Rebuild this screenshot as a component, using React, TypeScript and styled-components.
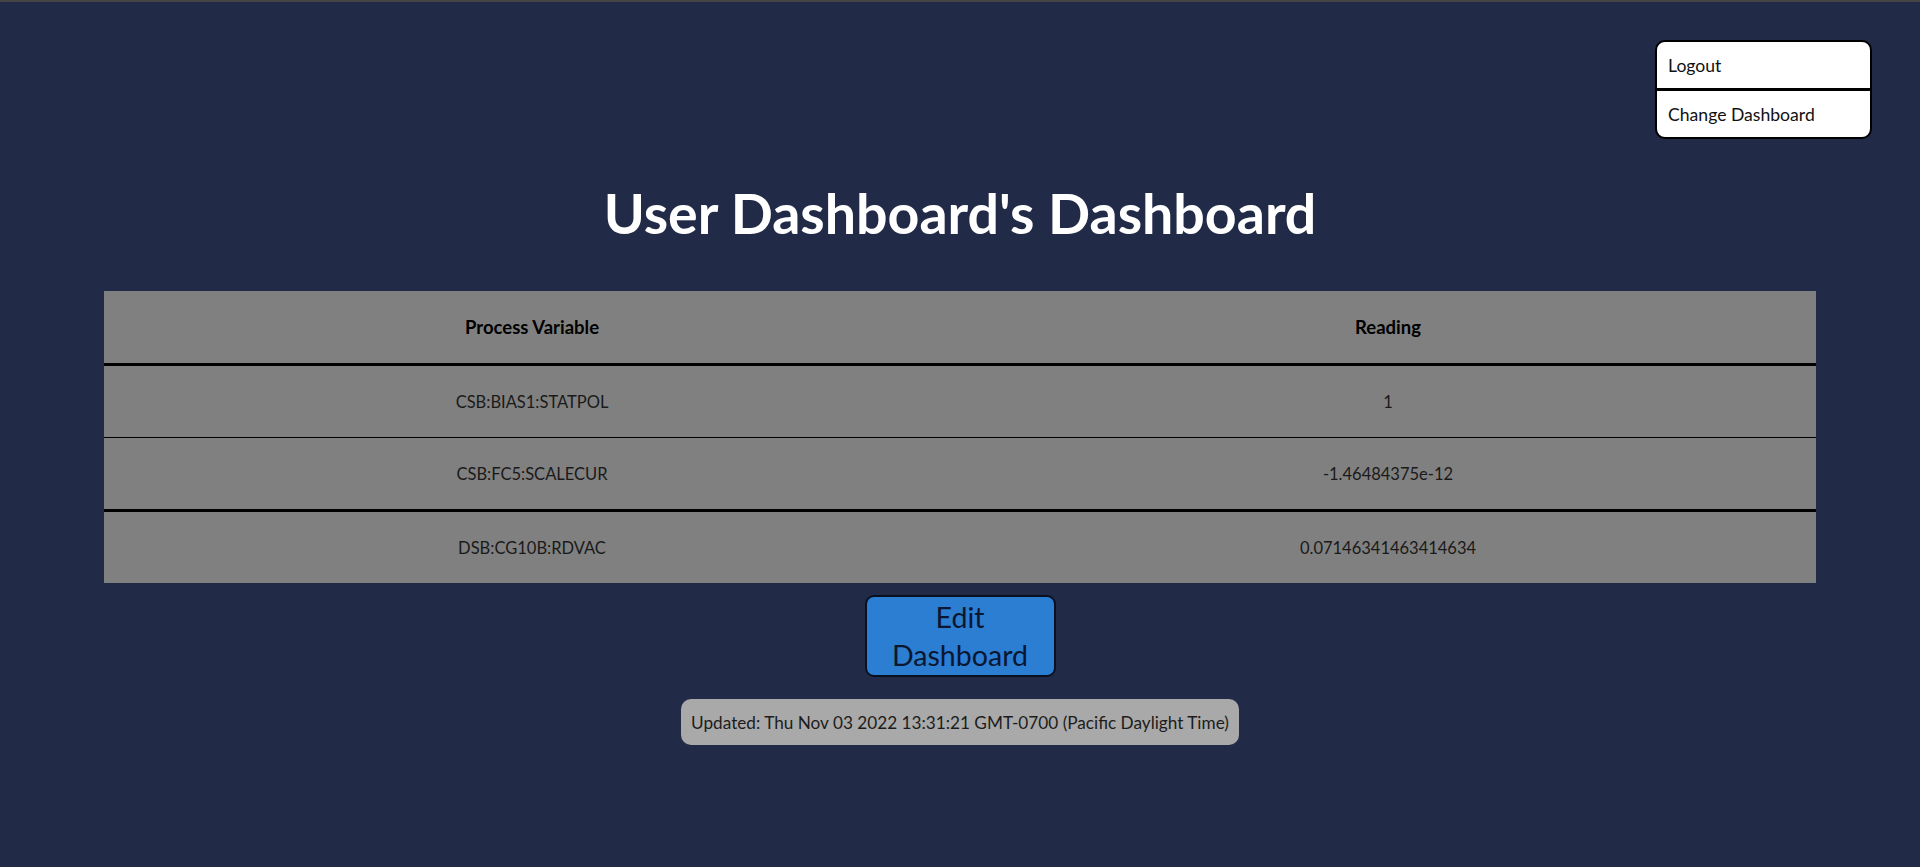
import React from 'react'
import styled, { createGlobalStyle } from 'styled-components'

const GlobalStyle = createGlobalStyle`
  html, body {
    margin: 0;
    padding: 0;
    background: #212a47;
  }
  body {
    font-family: Lato, "Noto Sans", "Liberation Sans", sans-serif;
    border-top: 2px solid #454545;
  }
`

const Page = styled.div`
  min-height: calc(100vh - 2px);
  display: flex;
  flex-direction: column;
  align-items: center;
  background: #212a47;
`

const TopBar = styled.div`
  align-self: stretch;
  display: flex;
  justify-content: flex-end;
  padding: 38px 48px 0 0;
`

const Menu = styled.div`
  width: 213px;
  background: #ffffff;
  border: 2px solid #000000;
  border-radius: 10px;
  overflow: hidden;
  display: flex;
  flex-direction: column;
`

interface MenuItemProps {
  divided?: boolean
}

const MenuItem = styled.button<MenuItemProps>`
  height: ${p => (p.divided ? '49px' : '46px')};
  border: none;
  border-top: ${p => (p.divided ? '3px solid #000' : 'none')};
  background: transparent;
  text-align: left;
  padding: 0 0 0 11px;
  font-family: inherit;
  font-size: 17.6px;
  color: #111;
  cursor: pointer;
`

const Title = styled.h1`
  margin: 39px 0 43px;
  color: #ffffff;
  font-size: 55.5px;
  font-weight: 700;
  line-height: 70px;
`

const Table = styled.table`
  width: 1712px;
  border-collapse: collapse;
  background: #808080;
  table-layout: fixed;
`

interface RowProps {
  line: number
}

const Row = styled.tr<RowProps>`
  border-bottom: ${p => (p.line ? `${p.line}px solid #000` : 'none')};
`

const HeadCell = styled.th`
  height: 72px;
  padding: 0;
  font-size: 18.5px;
  font-weight: 700;
  color: #000;
`

const Cell = styled.td`
  height: 71px;
  padding: 0;
  text-align: center;
  font-size: 16.5px;
  color: #1a1a1a;
`

const EditButton = styled.button`
  margin-top: 12px;
  width: 191px;
  height: 82px;
  background: #2b7ed2;
  border: 2px solid #0b1020;
  border-radius: 9px;
  font-family: inherit;
  font-size: 28.6px;
  line-height: 38px;
  color: #0c1630;
  padding: 0;
  cursor: pointer;
`

const Updated = styled.div`
  margin-top: 22px;
  background: #a9a9a9;
  border-radius: 10px;
  height: 46px;
  padding: 0 10px;
  display: flex;
  align-items: center;
  font-size: 17.2px;
  color: #1c1c1c;
`

const rows = [
  { pv: 'CSB:BIAS1:STATPOL', reading: '1', line: 1 },
  { pv: 'CSB:FC5:SCALECUR', reading: '-1.46484375e-12', line: 3 },
  { pv: 'DSB:CG10B:RDVAC', reading: '0.07146341463414634', line: 0 },
]

const App: React.FC = () => (
  <Page>
    <GlobalStyle />
    <TopBar>
      <Menu>
        <MenuItem>Logout</MenuItem>
        <MenuItem divided>Change Dashboard</MenuItem>
      </Menu>
    </TopBar>
    <Title>User Dashboard's Dashboard</Title>
    <Table>
      <thead>
        <Row line={3}>
          <HeadCell>Process Variable</HeadCell>
          <HeadCell>Reading</HeadCell>
        </Row>
      </thead>
      <tbody>
        {rows.map(r => (
          <Row key={r.pv} line={r.line}>
            <Cell>{r.pv}</Cell>
            <Cell>{r.reading}</Cell>
          </Row>
        ))}
      </tbody>
    </Table>
    <EditButton>
      Edit
      <br />
      Dashboard
    </EditButton>
    <Updated>Updated: Thu Nov 03 2022 13:31:21 GMT-0700 (Pacific Daylight Time)</Updated>
  </Page>
)

export default App
